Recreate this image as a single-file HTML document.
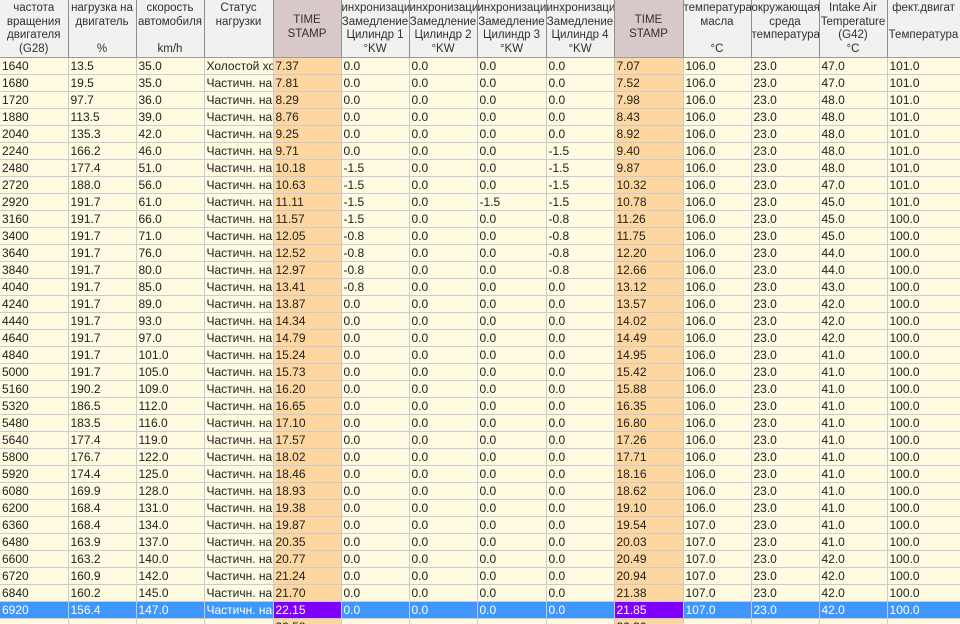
<!DOCTYPE html>
<html><head><meta charset="utf-8">
<style>
html,body{margin:0;padding:0;width:960px;height:624px;overflow:hidden;background:#fffbe1;}
table{border-collapse:collapse;table-layout:fixed;width:960px;font-family:"Liberation Sans",sans-serif;font-size:12px;color:#202020;}
td,th{overflow:hidden;white-space:nowrap;padding:0 0 0 2px;}
th{background:#f1f1ef;font-weight:normal;font-size:11.5px;line-height:13.5px;vertical-align:top;text-align:center;color:#303030;border-right:1px solid #8e8e8e;border-bottom:1px solid #9a9a9a;padding:0;}
th div{height:57px;overflow:hidden;padding-top:2px;box-sizing:border-box;}
th.ts{background:#d8c8ca;}
th.ts div{padding-top:14px;}
td{height:16px;line-height:16px;border-right:1px solid #c9cad6;border-bottom:1px solid #c9cad6;}
td.o{background:#fed7a0;}
tr.sel td{background:#3d97ff;color:#fff;}
tr.sel td.o{background:#8000ff;}
</style></head><body>
<table>
<colgroup><col style="width:68px"><col style="width:68px"><col style="width:68px"><col style="width:69px"><col style="width:68px"><col style="width:68px"><col style="width:68px"><col style="width:69px"><col style="width:68px"><col style="width:69px"><col style="width:68px"><col style="width:68px"><col style="width:68px"><col style="width:73px"></colgroup>
<tr>
<th><div>частота<br>вращения<br>двигателя<br>(G28)</div></th>
<th><div>нагрузка на<br>двигатель<br><br>%</div></th>
<th><div>скорость<br>автомобиля<br><br>km/h</div></th>
<th><div>Статус<br>нагрузки</div></th>
<th class="ts"><div>TIME<br>STAMP</div></th>
<th><div>инхронизаци<br>Замедление<br>Цилиндр 1<br>°KW</div></th>
<th><div>инхронизаци<br>Замедление<br>Цилиндр 2<br>°KW</div></th>
<th><div>инхронизаци<br>Замедление<br>Цилиндр 3<br>°KW</div></th>
<th><div>инхронизаци<br>Замедление<br>Цилиндр 4<br>°KW</div></th>
<th class="ts"><div>TIME<br>STAMP</div></th>
<th><div>температура<br>масла<br><br>°C</div></th>
<th><div>окружающая<br>среда<br>температура</div></th>
<th><div>Intake Air<br>Temperature<br>(G42)<br>°C</div></th>
<th><div>фект.двигат<br><br>Температура</div></th>
</tr>
<tr><td>1640</td><td>13.5</td><td>35.0</td><td>Холостой ход</td><td class="o">7.37</td><td>0.0</td><td>0.0</td><td>0.0</td><td>0.0</td><td class="o">7.07</td><td>106.0</td><td>23.0</td><td>47.0</td><td>101.0</td></tr>
<tr><td>1680</td><td>19.5</td><td>35.0</td><td>Частичн. на</td><td class="o">7.81</td><td>0.0</td><td>0.0</td><td>0.0</td><td>0.0</td><td class="o">7.52</td><td>106.0</td><td>23.0</td><td>47.0</td><td>101.0</td></tr>
<tr><td>1720</td><td>97.7</td><td>36.0</td><td>Частичн. на</td><td class="o">8.29</td><td>0.0</td><td>0.0</td><td>0.0</td><td>0.0</td><td class="o">7.98</td><td>106.0</td><td>23.0</td><td>48.0</td><td>101.0</td></tr>
<tr><td>1880</td><td>113.5</td><td>39.0</td><td>Частичн. на</td><td class="o">8.76</td><td>0.0</td><td>0.0</td><td>0.0</td><td>0.0</td><td class="o">8.43</td><td>106.0</td><td>23.0</td><td>48.0</td><td>101.0</td></tr>
<tr><td>2040</td><td>135.3</td><td>42.0</td><td>Частичн. на</td><td class="o">9.25</td><td>0.0</td><td>0.0</td><td>0.0</td><td>0.0</td><td class="o">8.92</td><td>106.0</td><td>23.0</td><td>48.0</td><td>101.0</td></tr>
<tr><td>2240</td><td>166.2</td><td>46.0</td><td>Частичн. на</td><td class="o">9.71</td><td>0.0</td><td>0.0</td><td>0.0</td><td>-1.5</td><td class="o">9.40</td><td>106.0</td><td>23.0</td><td>48.0</td><td>101.0</td></tr>
<tr><td>2480</td><td>177.4</td><td>51.0</td><td>Частичн. на</td><td class="o">10.18</td><td>-1.5</td><td>0.0</td><td>0.0</td><td>-1.5</td><td class="o">9.87</td><td>106.0</td><td>23.0</td><td>48.0</td><td>101.0</td></tr>
<tr><td>2720</td><td>188.0</td><td>56.0</td><td>Частичн. на</td><td class="o">10.63</td><td>-1.5</td><td>0.0</td><td>0.0</td><td>-1.5</td><td class="o">10.32</td><td>106.0</td><td>23.0</td><td>47.0</td><td>101.0</td></tr>
<tr><td>2920</td><td>191.7</td><td>61.0</td><td>Частичн. на</td><td class="o">11.11</td><td>-1.5</td><td>0.0</td><td>-1.5</td><td>-1.5</td><td class="o">10.78</td><td>106.0</td><td>23.0</td><td>45.0</td><td>101.0</td></tr>
<tr><td>3160</td><td>191.7</td><td>66.0</td><td>Частичн. на</td><td class="o">11.57</td><td>-1.5</td><td>0.0</td><td>0.0</td><td>-0.8</td><td class="o">11.26</td><td>106.0</td><td>23.0</td><td>45.0</td><td>100.0</td></tr>
<tr><td>3400</td><td>191.7</td><td>71.0</td><td>Частичн. на</td><td class="o">12.05</td><td>-0.8</td><td>0.0</td><td>0.0</td><td>-0.8</td><td class="o">11.75</td><td>106.0</td><td>23.0</td><td>45.0</td><td>100.0</td></tr>
<tr><td>3640</td><td>191.7</td><td>76.0</td><td>Частичн. на</td><td class="o">12.52</td><td>-0.8</td><td>0.0</td><td>0.0</td><td>-0.8</td><td class="o">12.20</td><td>106.0</td><td>23.0</td><td>44.0</td><td>100.0</td></tr>
<tr><td>3840</td><td>191.7</td><td>80.0</td><td>Частичн. на</td><td class="o">12.97</td><td>-0.8</td><td>0.0</td><td>0.0</td><td>-0.8</td><td class="o">12.66</td><td>106.0</td><td>23.0</td><td>44.0</td><td>100.0</td></tr>
<tr><td>4040</td><td>191.7</td><td>85.0</td><td>Частичн. на</td><td class="o">13.41</td><td>-0.8</td><td>0.0</td><td>0.0</td><td>0.0</td><td class="o">13.12</td><td>106.0</td><td>23.0</td><td>43.0</td><td>100.0</td></tr>
<tr><td>4240</td><td>191.7</td><td>89.0</td><td>Частичн. на</td><td class="o">13.87</td><td>0.0</td><td>0.0</td><td>0.0</td><td>0.0</td><td class="o">13.57</td><td>106.0</td><td>23.0</td><td>42.0</td><td>100.0</td></tr>
<tr><td>4440</td><td>191.7</td><td>93.0</td><td>Частичн. на</td><td class="o">14.34</td><td>0.0</td><td>0.0</td><td>0.0</td><td>0.0</td><td class="o">14.02</td><td>106.0</td><td>23.0</td><td>42.0</td><td>100.0</td></tr>
<tr><td>4640</td><td>191.7</td><td>97.0</td><td>Частичн. на</td><td class="o">14.79</td><td>0.0</td><td>0.0</td><td>0.0</td><td>0.0</td><td class="o">14.49</td><td>106.0</td><td>23.0</td><td>42.0</td><td>100.0</td></tr>
<tr><td>4840</td><td>191.7</td><td>101.0</td><td>Частичн. на</td><td class="o">15.24</td><td>0.0</td><td>0.0</td><td>0.0</td><td>0.0</td><td class="o">14.95</td><td>106.0</td><td>23.0</td><td>41.0</td><td>100.0</td></tr>
<tr><td>5000</td><td>191.7</td><td>105.0</td><td>Частичн. на</td><td class="o">15.73</td><td>0.0</td><td>0.0</td><td>0.0</td><td>0.0</td><td class="o">15.42</td><td>106.0</td><td>23.0</td><td>41.0</td><td>100.0</td></tr>
<tr><td>5160</td><td>190.2</td><td>109.0</td><td>Частичн. на</td><td class="o">16.20</td><td>0.0</td><td>0.0</td><td>0.0</td><td>0.0</td><td class="o">15.88</td><td>106.0</td><td>23.0</td><td>41.0</td><td>100.0</td></tr>
<tr><td>5320</td><td>186.5</td><td>112.0</td><td>Частичн. на</td><td class="o">16.65</td><td>0.0</td><td>0.0</td><td>0.0</td><td>0.0</td><td class="o">16.35</td><td>106.0</td><td>23.0</td><td>41.0</td><td>100.0</td></tr>
<tr><td>5480</td><td>183.5</td><td>116.0</td><td>Частичн. на</td><td class="o">17.10</td><td>0.0</td><td>0.0</td><td>0.0</td><td>0.0</td><td class="o">16.80</td><td>106.0</td><td>23.0</td><td>41.0</td><td>100.0</td></tr>
<tr><td>5640</td><td>177.4</td><td>119.0</td><td>Частичн. на</td><td class="o">17.57</td><td>0.0</td><td>0.0</td><td>0.0</td><td>0.0</td><td class="o">17.26</td><td>106.0</td><td>23.0</td><td>41.0</td><td>100.0</td></tr>
<tr><td>5800</td><td>176.7</td><td>122.0</td><td>Частичн. на</td><td class="o">18.02</td><td>0.0</td><td>0.0</td><td>0.0</td><td>0.0</td><td class="o">17.71</td><td>106.0</td><td>23.0</td><td>41.0</td><td>100.0</td></tr>
<tr><td>5920</td><td>174.4</td><td>125.0</td><td>Частичн. на</td><td class="o">18.46</td><td>0.0</td><td>0.0</td><td>0.0</td><td>0.0</td><td class="o">18.16</td><td>106.0</td><td>23.0</td><td>41.0</td><td>100.0</td></tr>
<tr><td>6080</td><td>169.9</td><td>128.0</td><td>Частичн. на</td><td class="o">18.93</td><td>0.0</td><td>0.0</td><td>0.0</td><td>0.0</td><td class="o">18.62</td><td>106.0</td><td>23.0</td><td>41.0</td><td>100.0</td></tr>
<tr><td>6200</td><td>168.4</td><td>131.0</td><td>Частичн. на</td><td class="o">19.38</td><td>0.0</td><td>0.0</td><td>0.0</td><td>0.0</td><td class="o">19.10</td><td>106.0</td><td>23.0</td><td>41.0</td><td>100.0</td></tr>
<tr><td>6360</td><td>168.4</td><td>134.0</td><td>Частичн. на</td><td class="o">19.87</td><td>0.0</td><td>0.0</td><td>0.0</td><td>0.0</td><td class="o">19.54</td><td>107.0</td><td>23.0</td><td>41.0</td><td>100.0</td></tr>
<tr><td>6480</td><td>163.9</td><td>137.0</td><td>Частичн. на</td><td class="o">20.35</td><td>0.0</td><td>0.0</td><td>0.0</td><td>0.0</td><td class="o">20.03</td><td>107.0</td><td>23.0</td><td>41.0</td><td>100.0</td></tr>
<tr><td>6600</td><td>163.2</td><td>140.0</td><td>Частичн. на</td><td class="o">20.77</td><td>0.0</td><td>0.0</td><td>0.0</td><td>0.0</td><td class="o">20.49</td><td>107.0</td><td>23.0</td><td>42.0</td><td>100.0</td></tr>
<tr><td>6720</td><td>160.9</td><td>142.0</td><td>Частичн. на</td><td class="o">21.24</td><td>0.0</td><td>0.0</td><td>0.0</td><td>0.0</td><td class="o">20.94</td><td>107.0</td><td>23.0</td><td>42.0</td><td>100.0</td></tr>
<tr><td>6840</td><td>160.2</td><td>145.0</td><td>Частичн. на</td><td class="o">21.70</td><td>0.0</td><td>0.0</td><td>0.0</td><td>0.0</td><td class="o">21.38</td><td>107.0</td><td>23.0</td><td>42.0</td><td>100.0</td></tr>
<tr class="sel"><td>6920</td><td>156.4</td><td>147.0</td><td>Частичн. на</td><td class="o">22.15</td><td>0.0</td><td>0.0</td><td>0.0</td><td>0.0</td><td class="o">21.85</td><td>107.0</td><td>23.0</td><td>42.0</td><td>100.0</td></tr>
<tr><td></td><td></td><td></td><td></td><td class="o">22.58</td><td></td><td></td><td></td><td></td><td class="o">22.30</td><td></td><td></td><td></td><td></td></tr>
</table>
</body></html>
